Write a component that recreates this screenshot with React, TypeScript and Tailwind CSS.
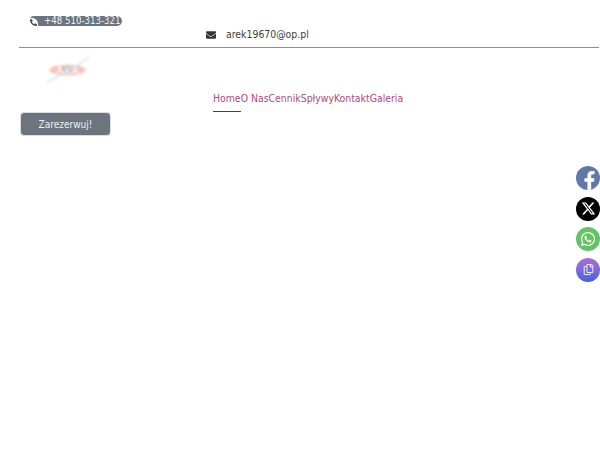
import { FaFacebookF, FaWhatsapp, FaEnvelope, FaPhoneAlt, FaRegCopy } from "react-icons/fa";
import { FaXTwitter } from "react-icons/fa6";

const navItems = ["Home", "O Nas", "Cennik", "Spływy", "Kontakt", "Galeria"];

function Logo() {
  return (
    <svg width="46" height="32" viewBox="0 0 46 32" className="blur-[0.8px]">
      <ellipse cx="22.5" cy="16" rx="18" ry="5.5" fill="#f8c4bc" />
      <ellipse cx="23" cy="15" rx="6" ry="3" fill="#a8adb3" />
      <text x="22.5" y="20" textAnchor="middle" fontSize="11" fill="#ffffff" fontFamily="'DejaVu Sans', sans-serif">AKA</text>
      <line x1="2" y1="29" x2="44" y2="4" stroke="#cdeaf3" strokeWidth="1.5" />
    </svg>
  );
}

export default function App() {
  return (
    <div className="relative h-[450px] w-[600px] overflow-hidden bg-white font-['DejaVu_Sans_Condensed','DejaVu_Sans',sans-serif] text-[10.4px] text-[#3d3d3d]">
      <div className="pt-4 pr-px pl-[19px]">
        <div className="ml-[10px] flex h-[10px] w-[93px] items-center rounded-[5px] bg-[#6c757d] text-[9.6px] text-[#eef0f2]">
          <span className="flex h-[8px] w-[9px] shrink-0 items-center justify-center self-end rounded-tr-[6px] bg-white">
            <FaPhoneAlt size={7} className="text-[#4a4f55]" />
          </span>
          <span className="ml-[6px] whitespace-nowrap">+48 510-313-321</span>
        </div>
        <div className="mt-[2px] flex h-[14px] items-center pl-[187px]">
          <FaEnvelope size={10} className="text-[#333333]" />
          <span className="ml-[10px]">arek19670@op.pl</span>
        </div>
        <div className="mt-[5px] border-t border-[#8f8f8f]" />
        <div className="pt-[6px] pl-[26px]">
          <Logo />
        </div>
        <nav className="mt-[5px] flex pl-[194px] leading-[15px] text-[#b4477c]">
          {navItems.map((item, index) => (
            <a key={item} className={index === 0 ? "border-b border-[#444444] pb-[5px]" : ""}>
              {item}
            </a>
          ))}
        </nav>
        <button className="ml-[1px] h-[24px] w-[91px] rounded-[4px] border border-[#dcdfe2] bg-[#6c757d] text-[10px] text-[#eef0f2]">
          Zarezerwuj!
        </button>
      </div>

      <div className="absolute top-[166px] left-[576px] flex flex-col gap-[6.5px]">
        <div className="flex h-6 w-6 items-center justify-center overflow-hidden rounded-full bg-[#6279a8] text-white">
          <FaFacebookF size={19} className="mt-[4px] ml-[2px]" />
        </div>
        <div className="flex h-6 w-6 items-center justify-center rounded-full bg-black text-white">
          <FaXTwitter size={15} />
        </div>
        <div className="flex h-6 w-6 items-center justify-center rounded-full bg-[#62c467] text-white">
          <FaWhatsapp size={16} />
        </div>
        <div className="flex h-6 w-6 items-center justify-center rounded-full bg-gradient-to-b from-[#b06ad8] to-[#3f62e0] text-[#e6e6fa]">
          <FaRegCopy size={11} />
        </div>
      </div>
    </div>
  );
}
